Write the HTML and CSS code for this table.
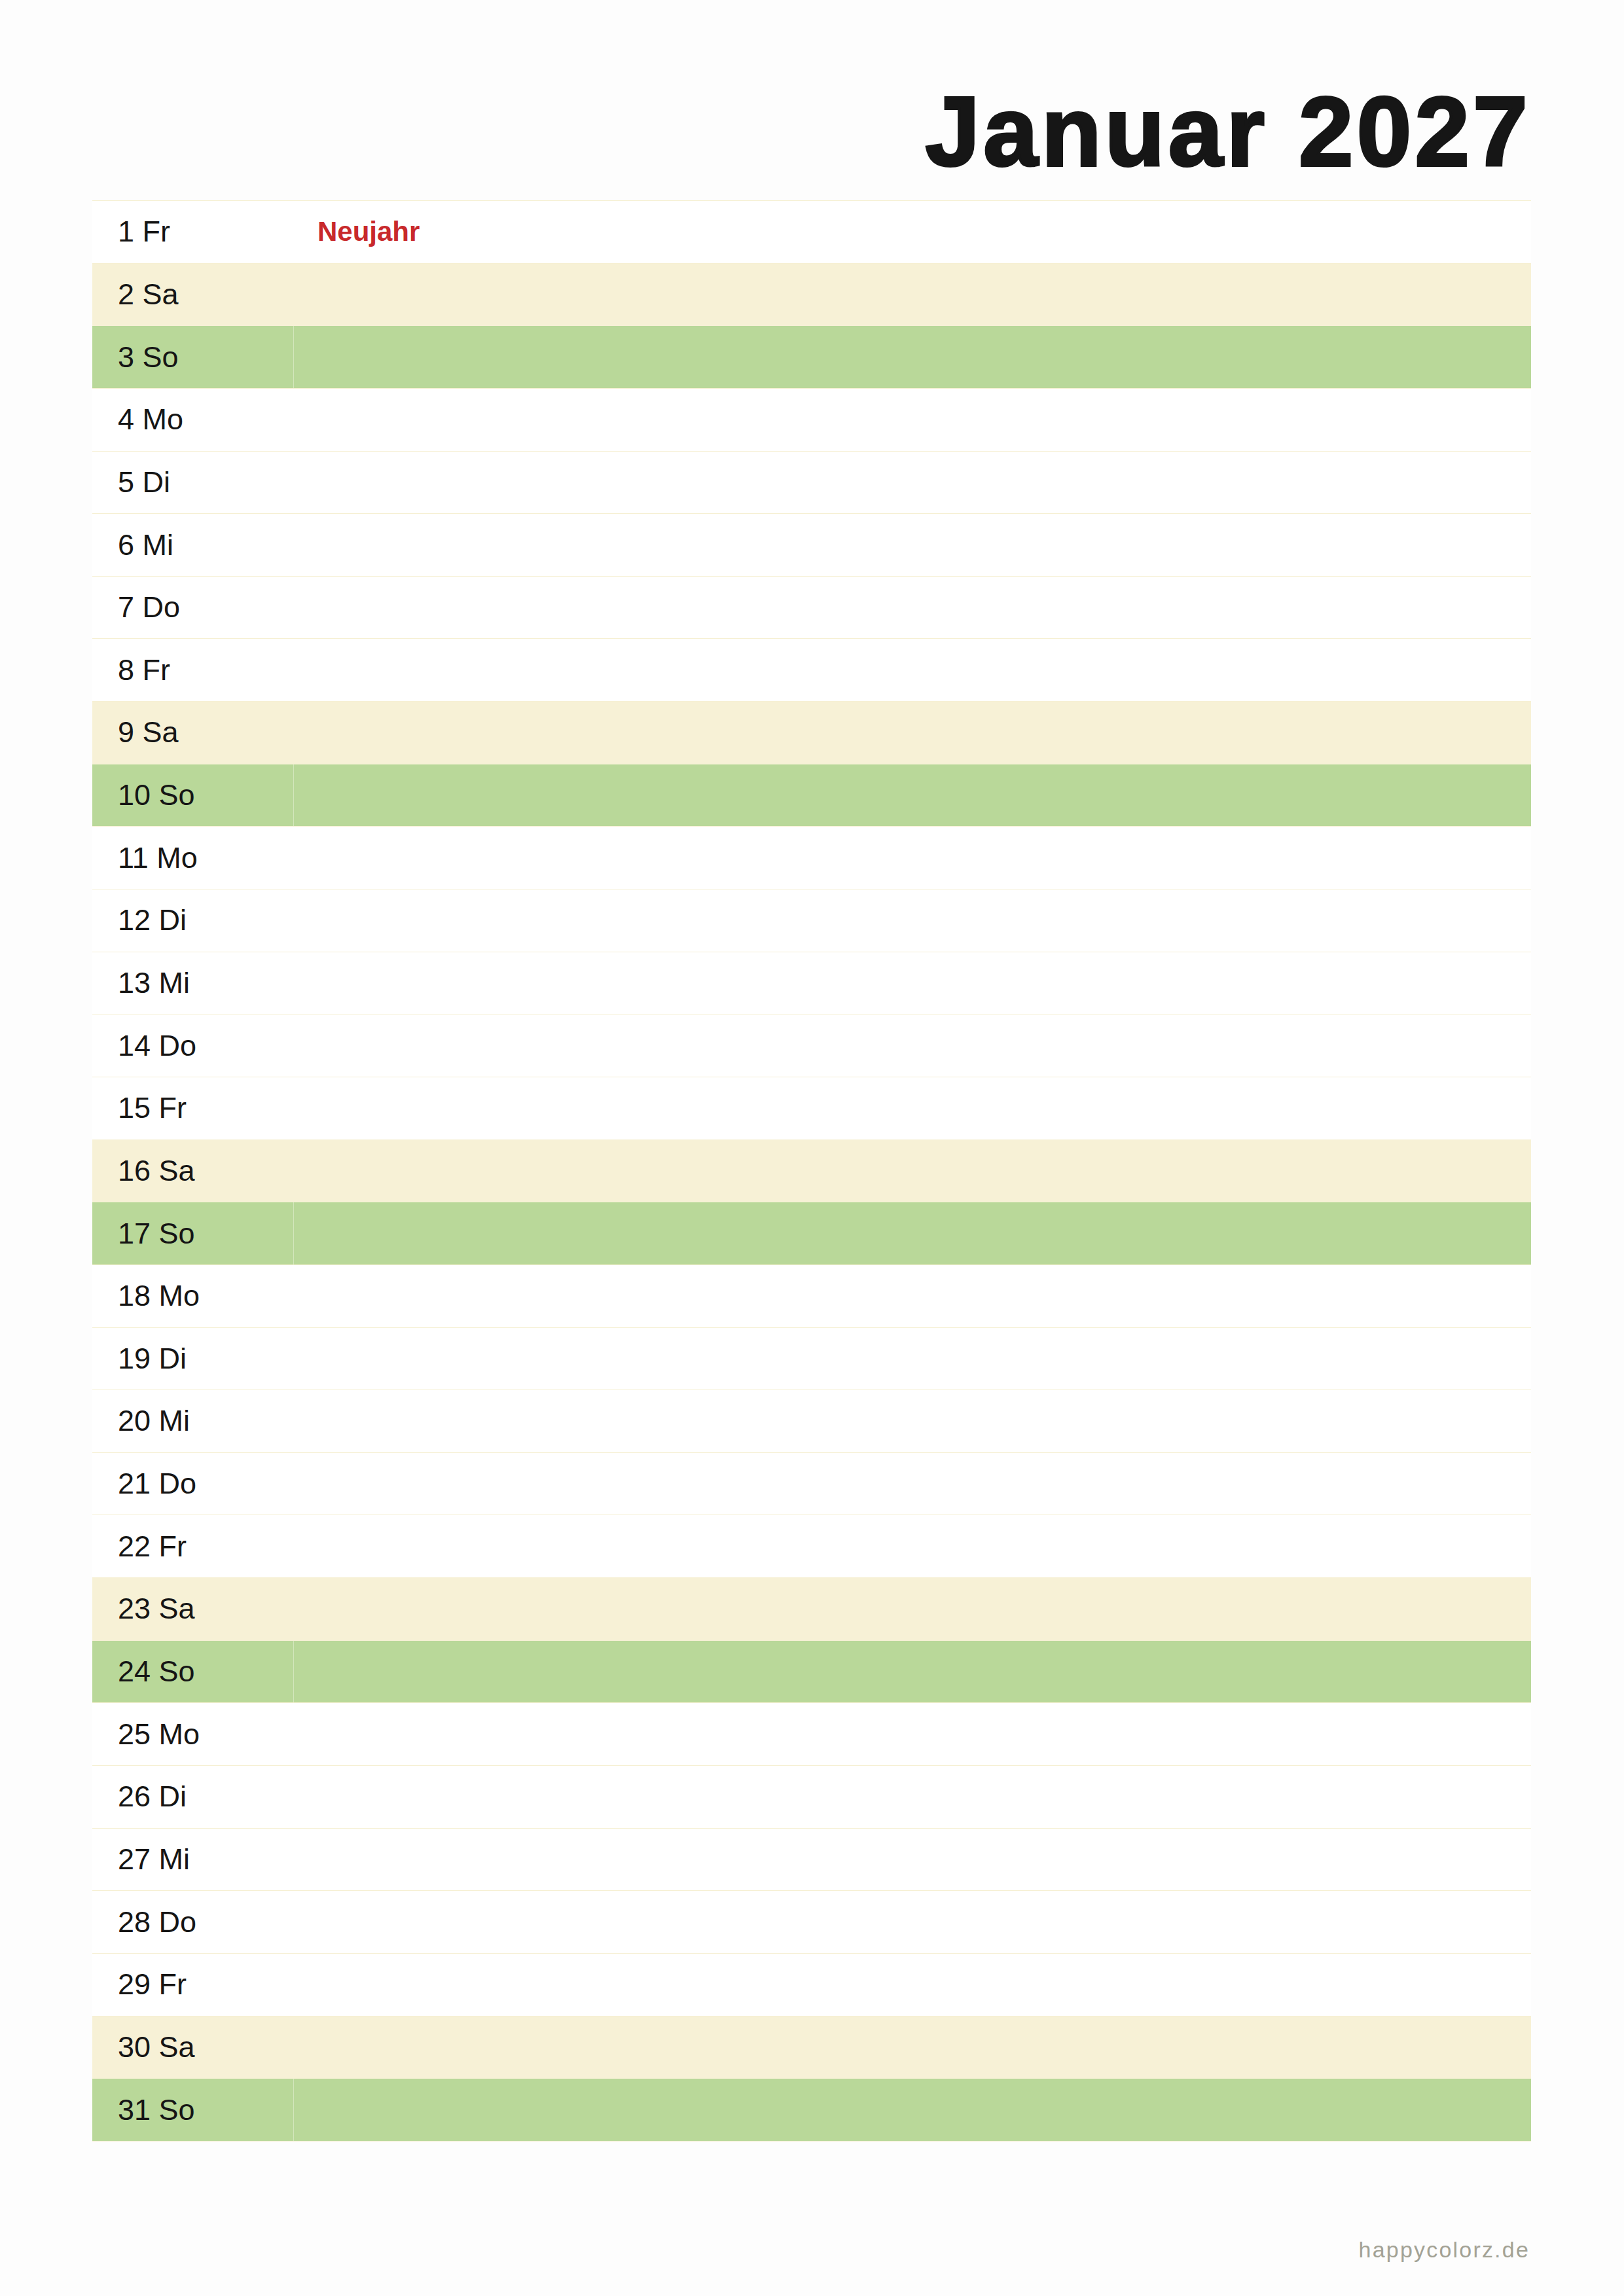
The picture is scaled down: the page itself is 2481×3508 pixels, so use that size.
FILE: index.html
```html
<!DOCTYPE html>
<html lang="de">
<head>
<meta charset="utf-8">
<title>Januar 2027</title>
<link rel="stylesheet" href="styles.css">
</head>
<body>
<div class="page">
  <h1 class="title">Januar 2027</h1>
  <div class="cal">
    <div class="row"><div class="day">1 Fr</div><div class="note holiday">Neujahr</div></div>
    <div class="row sat"><div class="day">2 Sa</div><div class="note"></div></div>
    <div class="row sun"><div class="day">3 So</div><div class="note"></div></div>
    <div class="row"><div class="day">4 Mo</div><div class="note"></div></div>
    <div class="row"><div class="day">5 Di</div><div class="note"></div></div>
    <div class="row"><div class="day">6 Mi</div><div class="note"></div></div>
    <div class="row"><div class="day">7 Do</div><div class="note"></div></div>
    <div class="row"><div class="day">8 Fr</div><div class="note"></div></div>
    <div class="row sat"><div class="day">9 Sa</div><div class="note"></div></div>
    <div class="row sun"><div class="day">10 So</div><div class="note"></div></div>
    <div class="row"><div class="day">11 Mo</div><div class="note"></div></div>
    <div class="row"><div class="day">12 Di</div><div class="note"></div></div>
    <div class="row"><div class="day">13 Mi</div><div class="note"></div></div>
    <div class="row"><div class="day">14 Do</div><div class="note"></div></div>
    <div class="row"><div class="day">15 Fr</div><div class="note"></div></div>
    <div class="row sat"><div class="day">16 Sa</div><div class="note"></div></div>
    <div class="row sun"><div class="day">17 So</div><div class="note"></div></div>
    <div class="row"><div class="day">18 Mo</div><div class="note"></div></div>
    <div class="row"><div class="day">19 Di</div><div class="note"></div></div>
    <div class="row"><div class="day">20 Mi</div><div class="note"></div></div>
    <div class="row"><div class="day">21 Do</div><div class="note"></div></div>
    <div class="row"><div class="day">22 Fr</div><div class="note"></div></div>
    <div class="row sat"><div class="day">23 Sa</div><div class="note"></div></div>
    <div class="row sun"><div class="day">24 So</div><div class="note"></div></div>
    <div class="row"><div class="day">25 Mo</div><div class="note"></div></div>
    <div class="row"><div class="day">26 Di</div><div class="note"></div></div>
    <div class="row"><div class="day">27 Mi</div><div class="note"></div></div>
    <div class="row"><div class="day">28 Do</div><div class="note"></div></div>
    <div class="row"><div class="day">29 Fr</div><div class="note"></div></div>
    <div class="row sat"><div class="day">30 Sa</div><div class="note"></div></div>
    <div class="row sun"><div class="day">31 So</div><div class="note"></div></div>
  </div>
  <div class="footer">happycolorz.de</div>
</div>
</body>
</html>
```
FILE: styles.css
```css
html, body {
  margin: 0;
  padding: 0;
  background: #fdfdfd;
}
.page {
  width: 2481px;
  height: 3508px;
  box-sizing: border-box;
  padding: 126px 142px 0 141px;
  font-family: "Liberation Sans", Arial, sans-serif;
  color: #161616;
}
.title {
  margin: 0 0 30px 0;
  font-size: 150px;
  line-height: 150px;
  height: 150px;
  font-weight: 700;
  text-align: right;
  letter-spacing: 5.3px;
  -webkit-text-stroke: 4px #161616;
  color: #161616;
}
.cal {
  display: grid;
  grid-template-rows: repeat(31, 95.65px);
  border-top: 1px solid #f6f0d3;
}
.row {
  display: grid;
  grid-template-columns: 308px 1fr;
  background: #ffffff;
  border-bottom: 1px solid #f6f0d3;
  box-sizing: border-box;
}
.row.sat {
  background: #f7f1d6;
  border-bottom-color: #f7f1d6;
}
.row.sun {
  background: #b9d899;
  border-bottom-color: #f6f0d3;
}
.row.sun .day {
  border-right: 1px solid #d3e6bb;
}
.day {
  display: flex;
  align-items: center;
  padding-left: 39px;
  font-size: 45px;
  color: #151515;
}
.note {
  display: flex;
  align-items: center;
  padding-left: 36px;
  font-size: 42px;
}
.holiday {
  color: #c8292b;
  font-weight: 700;
}
.footer {
  margin-top: 148px;
  text-align: right;
  font-size: 34px;
  line-height: 34px;
  letter-spacing: 2.2px;
  color: #a3a295;
  margin-right: 2px;
}
```
